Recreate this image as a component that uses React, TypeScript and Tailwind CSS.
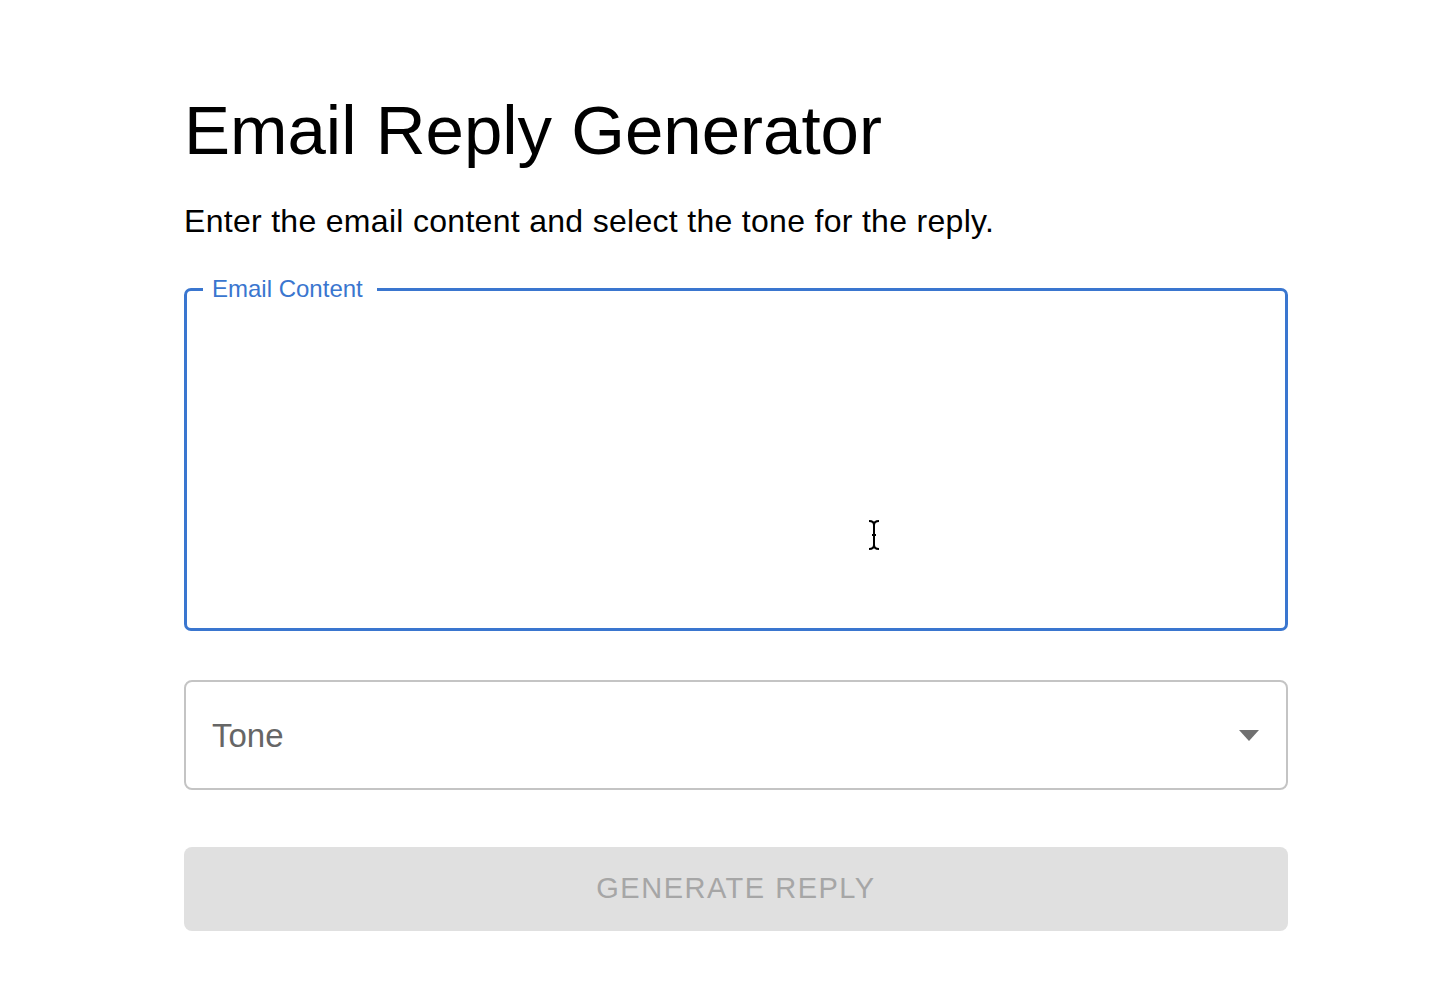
import React, { useState } from 'react';

const tones = ['Professional', 'Casual', 'Friendly'];

const App: React.FC = () => {
    const [content, setContent] = useState('');
    const [tone, setTone] = useState('');

    return (
        <div className="relative min-h-[1008px] bg-white font-['Liberation_Sans',Helvetica,Arial,sans-serif] text-black">
            <div className="ml-[184px] w-[1104px] pt-[91px] flex flex-col">
                <h1 className="text-[69px] leading-[79px] font-normal">Email Reply Generator</h1>
                <p className="mt-[28px] text-[32px] leading-[46px] tracking-[0.3px]">
                    Enter the email content and select the tone for the reply.
                </p>

                {/* Email content, focused outline with notch */}
                <fieldset className="mt-[33px] h-[354px] border-[3px] border-[#3a76cf] rounded-[7px] px-0 pb-[16px]">
                    <legend className="ml-[16px] pl-[9px] pr-[14px] text-[24px] leading-[24px] text-[#3a76cf]">
                        Email Content
                    </legend>
                    <textarea
                        value={content}
                        onChange={e => setContent(e.target.value)}
                        className="w-full h-full resize-none outline-none px-[24px] text-[30px] bg-transparent"
                    />
                </fieldset>

                {/* Tone select */}
                <div className="mt-[49px] relative h-[110px] border-2 border-[#c4c4c4] rounded-[8px] flex items-center pl-[26px] pr-[30px]">
                    <span className="flex-1 text-[33px] leading-none text-[#666666]">{tone || 'Tone'}</span>
                    <svg width="20" height="11" viewBox="0 0 20 11" className="mr-[-3px]">
                        <polygon points="0,0 20,0 10,11" fill="#707070" />
                    </svg>
                    <select
                        value={tone}
                        onChange={e => setTone(e.target.value)}
                        className="absolute inset-0 opacity-0 cursor-pointer"
                    >
                        <option value="" />
                        {tones.map(t => (
                            <option key={t} value={t}>{t}</option>
                        ))}
                    </select>
                </div>

                <button
                    disabled
                    className="mt-[57px] h-[84px] rounded-[8px] bg-[#e0e0e0] text-[#a6a6a6] text-[29px] tracking-[1.5px] uppercase"
                >
                    Generate Reply
                </button>
            </div>

            {/* text cursor */}
            <svg width="16" height="32" viewBox="0 0 16 32" className="absolute left-[866px] top-[519px] pointer-events-none">
                <path d="M3 2 Q8 2 8 6 Q8 2 13 2" fill="none" stroke="#000" strokeWidth="2" />
                <path d="M3 30 Q8 30 8 26 Q8 30 13 30" fill="none" stroke="#000" strokeWidth="2" />
                <line x1="8" y1="5" x2="8" y2="27" stroke="#000" strokeWidth="2" />
                <line x1="6" y1="16" x2="10" y2="16" stroke="#000" strokeWidth="2" />
            </svg>
        </div>
    );
};

export default App;
